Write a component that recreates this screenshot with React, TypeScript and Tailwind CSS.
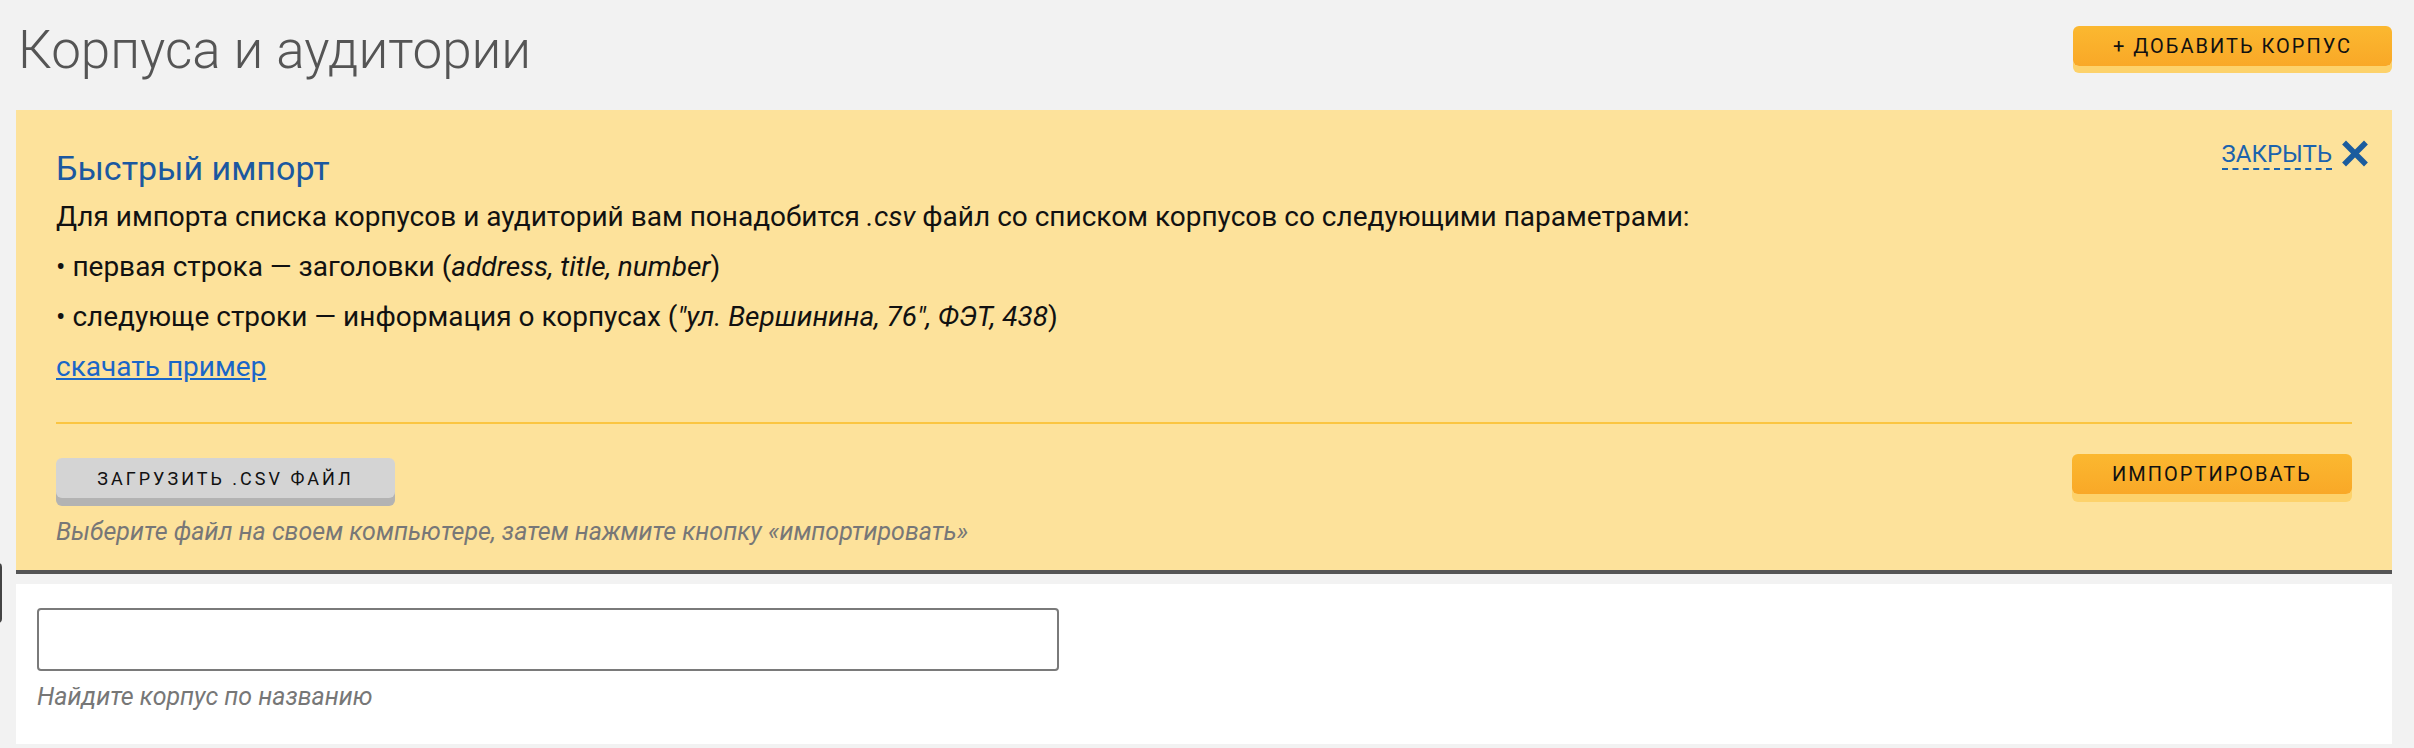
import { useState } from 'react';

export default function App() {
    const [query, setQuery] = useState('');

    return (
        <div className="relative w-full h-[748px] overflow-hidden bg-[#f2f2f2] font-['Roboto',_'Liberation_Sans',_sans-serif] pl-[16px] pr-[22px]">
            {/* left edge bracket (cut-off element) */}
            <div className="absolute left-[-12px] top-[563px] w-[14px] h-[60px] border-2 border-[#444] rounded-[4px]"></div>

            {/* Header */}
            <div className="flex justify-between items-start h-[110px]">
                <h1 className="pt-[24px] pl-[2px] text-[53px] leading-none font-light text-[#555]">
                    Корпуса и аудитории
                </h1>
                <button className="mt-[26px] h-[40px] w-[319px] rounded-[6px] bg-gradient-to-b from-[#fbb830] to-[#f9a827] shadow-[0_7px_0_#fdd26b] text-[20px] tracking-[2px] text-[#111]">
                    + ДОБАВИТЬ КОРПУС
                </button>
            </div>

            {/* Quick import panel */}
            <div className="relative bg-[#fde29b] border-b-4 border-[#555] px-[40px] pt-[41px] pb-[26px]">
                <button className="absolute top-[30px] right-[24px] flex items-center gap-[10px] text-[#1b63ad]">
                    <span className="text-[24px] leading-none pb-[2px] border-b-2 border-dashed border-[#1b63ad]">ЗАКРЫТЬ</span>
                    <svg width="26" height="27" viewBox="0 0 26 27" className="mb-[4px]">
                        <path d="M4 4.5 L22 22.5 M22 4.5 L4 22.5" stroke="#1b5c9e" strokeWidth="5.5" strokeLinecap="square" />
                    </svg>
                </button>

                <h2 className="text-[34px] leading-none text-[#1b58a0] mb-[7px]">Быстрый импорт</h2>
                <div className="text-[28px] leading-[50px] text-[#111]">
                    <p>
                        Для импорта списка корпусов и аудиторий вам понадобится <i>.csv</i> файл со списком корпусов со следующими параметрами:
                    </p>
                    <p>
                        • первая строка — заголовки (<i>address, title, number</i>)
                    </p>
                    <p>
                        • следующе строки — информация о корпусах (<i>"ул. Вершинина, 76", ФЭТ, 438</i>)
                    </p>
                    <p>
                        <a href="#" className="text-[#1a66c8] underline">скачать пример</a>
                    </p>
                </div>

                <div className="mt-[30px] h-[2px] bg-[#fbc541]"></div>

                <div className="flex justify-between items-start">
                    <div className="flex flex-col items-start">
                        <button className="mt-[34px] h-[40px] w-[339px] rounded-[6px] bg-[#d4d4d4] shadow-[0_8px_0_#b3b3b3] text-[18px] tracking-[3px] text-[#111]">
                            ЗАГРУЗИТЬ .CSV ФАЙЛ
                        </button>
                        <p className="mt-[21px] text-[25px] leading-none italic text-[#777]">
                            Выберите файл на своем компьютере, затем нажмите кнопку «импортировать»
                        </p>
                    </div>
                    <button className="mt-[30px] h-[40px] w-[280px] rounded-[6px] bg-gradient-to-b from-[#fbb830] to-[#f9a827] shadow-[0_8px_0_#fdd26b] text-[20px] tracking-[2px] text-[#111]">
                        ИМПОРТИРОВАТЬ
                    </button>
                </div>
            </div>

            {/* Search card */}
            <div className="mt-[10px] bg-white h-[160px] pl-[21px] pt-[24px]">
                <input
                    type="text"
                    value={query}
                    onChange={(e) => setQuery(e.target.value)}
                    className="block w-[1022px] h-[63px] border-2 border-[#7a7a7a] rounded-[4px] px-3 text-[24px] outline-none"
                />
                <p className="mt-[13px] text-[25px] leading-none italic text-[#777]">Найдите корпус по названию</p>
            </div>
        </div>
    );
}
